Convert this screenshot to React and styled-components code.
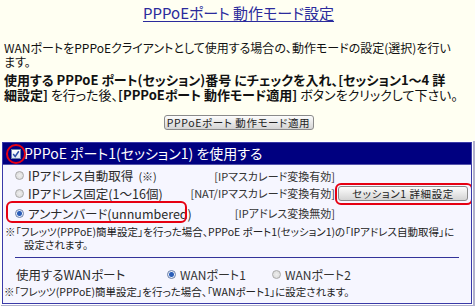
import React from "react";
import styled, { createGlobalStyle } from "styled-components";

const Global = createGlobalStyle`
  html, body { margin: 0; padding: 0; background: #fffff2; }
  body {
    font-family: "Noto Sans CJK JP", "Noto Sans", sans-serif;
    font-feature-settings: "palt";
    color: #000;
  }
`;

const Page = styled.div`
  width: 475px;
  height: 306px;
  overflow: hidden;
  padding: 0 0 0 2px;
  box-sizing: border-box;
`;

const Title = styled.h1`
  margin: 0;
  height: 26px;
  line-height: 26px;
  text-align: center;
  font-size: 15px;
  font-weight: normal;
  color: #2b2b9c;
  text-decoration: underline;
  text-underline-offset: 2px;
`;

const Desc = styled.p`
  margin: 15px 0 0 2px;
  font-size: 12px;
  line-height: 14px;
  white-space: nowrap;
  color: #111;
`;

const Instruction = styled.p`
  margin: 3px 0 0 2px;
  font-size: 13px;
  line-height: 15px;
  white-space: nowrap;
  color: #111;
  b { font-weight: bold; }
`;

const ApplyRow = styled.div`
  display: flex;
  justify-content: center;
  margin-top: 13px;
`;

const Button = styled.button`
  height: 15px;
  width: ${(p) => p.$w}px;
  padding: 0;
  border: 1px solid #8a8a8a;
  border-radius: 3px;
  background: linear-gradient(#fdfdfd, #e4e4e4 60%, #d4d4d4);
  font-family: "Noto Sans CJK JP", sans-serif;
  font-feature-settings: "palt";
  font-size: 10.5px;
  line-height: 13px;
  letter-spacing: 0.6px;
  color: #222;
`;

const Panel = styled.div`
  margin-top: 12px;
  width: 470px;
  height: 162px;
  box-sizing: border-box;
  border: 1px solid #3a3aa8;
  box-shadow: 0 0 0 1px #fff, 1px 1px 0 2px #b0b0cc;
  background: #f6f6ff;
  overflow: hidden;
`;

const PanelHeader = styled.div`
  height: 21px;
  background: #000080;
  display: flex;
  align-items: center;
  padding-left: 8px;
  color: #fff;
  font-size: 14px;
  line-height: 21px;
  border-bottom: 1px solid #5555aa;
`;

const Mark = styled.span`
  position: relative;
  display: inline-flex;
  align-items: center;
  justify-content: center;
  margin-right: 3px;
`;

const RedRing = styled.span`
  position: absolute;
  left: ${(p) => p.$l}px;
  top: ${(p) => p.$t}px;
  right: ${(p) => p.$r}px;
  bottom: ${(p) => p.$b}px;
  border: 2px solid #e60012;
  border-radius: ${(p) => p.$rad};
  pointer-events: none;
`;

const CheckBox = styled.span`
  width: 10px;
  height: 10px;
  box-sizing: border-box;
  border: 1px solid #6b7fa8;
  background: linear-gradient(#ffffff, #dfe6f3);
  display: inline-flex;
  align-items: center;
  justify-content: center;
`;

const Body = styled.div`
  padding: 2px 0 0 0;
`;

const ModeGrid = styled.div`
  display: grid;
  grid-template-columns: 180px 149px 130px;
  grid-template-rows: 17px 18px 22px;
  column-gap: 3px;
  align-items: center;
`;

const ModeLabel = styled.label`
  position: relative;
  display: flex;
  align-items: center;
  height: 100%;
  padding-left: 12px;
  font-size: 12.5px;
  color: #2a2a2a;
  white-space: nowrap;
  small { font-size: 11px; margin-left: 5px; }
`;

const Radio = styled.span`
  width: 9px;
  height: 9px;
  border-radius: 50%;
  box-sizing: border-box;
  border: 1px solid ${(p) => (p.$on ? "#6b7fa8" : "#a9a9a9")};
  background: ${(p) =>
    p.$on
      ? "radial-gradient(circle, #2a5db8 0 2px, #7ea3e0 2.5px, #e8eef8 3px)"
      : "radial-gradient(circle, #eeeeee, #d6d6d6)"};
  margin-right: 4px;
  flex: none;
`;

const ModeNote = styled.span`
  justify-self: end;
  font-size: 11px;
  color: #333;
  white-space: nowrap;
`;

const ButtonCell = styled.div`
  position: relative;
  display: flex;
`;

const Note = styled.p`
  margin: 1px 0 0 2px;
  font-size: 10.5px;
  line-height: 13px;
  color: #222;
  white-space: nowrap;
  span { display: block; padding-left: 19px; }
`;

const Divider = styled.hr`
  margin: 6px 12px 0 12px;
  border: 0;
  border-top: 1px solid #33339a;
`;

const WanRow = styled.div`
  display: flex;
  align-items: center;
  height: 22px;
  margin-top: 5px;
  padding-left: 13px;
  font-size: 12.5px;
  color: #2a2a2a;
`;

const WanLabel = styled.span`
  width: 151px;
`;

const WanOption = styled.label`
  display: flex;
  align-items: center;
  width: 105px;
  font-size: 12px;
  color: #333;
`;

const Foot = styled.p`
  margin: 0 0 0 1px;
  font-size: 10.5px;
  line-height: 14px;
  color: #222;
  white-space: nowrap;
`;

const Check = () => (
  <svg width="8" height="8" viewBox="0 0 8 8">
    <path d="M1.2 4 L3.2 6.4 L6.8 1.3" fill="none" stroke="#2b4fa8" strokeWidth="1.5" />
  </svg>
);

export default function App() {
  return (
    <>
      <Global />
      <Page>
        <Title>PPPoEポート 動作モード設定</Title>
        <Desc>
          WANポートをPPPoEクライアントとして使用する場合の、動作モードの設定(選択)を行い
          <br />
          ます。
        </Desc>
        <Instruction>
          <b>使用する PPPoE ポート(セッション)番号 にチェックを入れ、[セッション1〜4 詳</b>
          <br />
          <b>細設定]</b> を行った後、<b>[PPPoEポート 動作モード適用]</b> ボタンをクリックして下さい。
        </Instruction>
        <ApplyRow>
          <Button $w={150}>PPPoEポート 動作モード適用</Button>
        </ApplyRow>
        <Panel>
          <PanelHeader>
            <Mark>
              <CheckBox>
                <Check />
              </CheckBox>
              <RedRing $l={-5} $t={-5} $r={-5} $b={-5} $rad="50%" />
            </Mark>
            PPPoE ポート1(セッション1) を使用する
          </PanelHeader>
          <Body>
            <ModeGrid>
              <ModeLabel>
                <Radio />
                IPアドレス自動取得<small>(※)</small>
              </ModeLabel>
              <ModeNote>[IPマスカレード変換有効]</ModeNote>
              <div />
              <ModeLabel>
                <Radio />
                IPアドレス固定(1〜16個)
              </ModeLabel>
              <ModeNote>[NAT/IPマスカレード変換有効]</ModeNote>
              <ButtonCell>
                <Button $w={130}>セッション1 詳細設定</Button>
                <RedRing $l={-3} $t={-3} $r={-5} $b={-4} $rad="6px" />
              </ButtonCell>
              <ModeLabel>
                <Radio $on />
                アンナンバード(unnumbered)
                <RedRing $l={3} $t={-1} $r={-4} $b={1} $rad="6px" />
              </ModeLabel>
              <ModeNote>[IPアドレス変換無効]</ModeNote>
              <div />
            </ModeGrid>
            <Note>
              ※「フレッツ(PPPoE)簡単設定」を行った場合、PPPoE ポート1(セッション1)の「IPアドレス自動取得」に
              <span>設定されます。</span>
            </Note>
            <Divider />
            <WanRow>
              <WanLabel>使用するWANポート</WanLabel>
              <WanOption>
                <Radio $on />
                WANポート1
              </WanOption>
              <WanOption>
                <Radio />
                WANポート2
              </WanOption>
            </WanRow>
            <Foot>※「フレッツ(PPPoE)簡単設定」を行った場合、「WANポート1」に設定されます。</Foot>
          </Body>
        </Panel>
      </Page>
    </>
  );
}
